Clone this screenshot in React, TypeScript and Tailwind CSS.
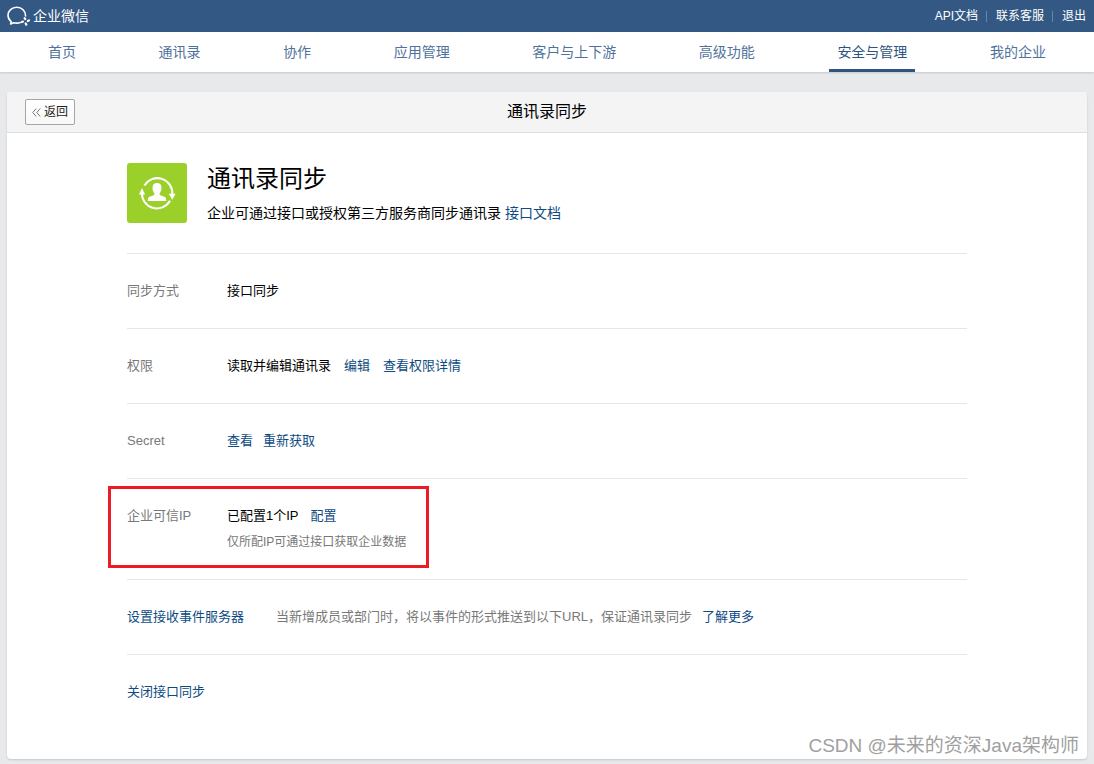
import type { ReactNode } from "react";
import { clsx } from "clsx";

const TOP_LINKS = ["API文档", "联系客服", "退出"];

const NAV_ITEMS = [
  { id: "home", label: "首页" },
  { id: "contacts", label: "通讯录" },
  { id: "collab", label: "协作" },
  { id: "apps", label: "应用管理" },
  { id: "customer", label: "客户与上下游" },
  { id: "advanced", label: "高级功能" },
  { id: "security", label: "安全与管理" },
  { id: "company", label: "我的企业" },
];

const ACTIVE_ID = "security";

function Logo() {
  return (
    <svg width="24" height="20" viewBox="0 0 24 20" fill="none" aria-hidden="true">
      <path
        d="M18.6 10C18.7 5 14.8 1.2 9.8 1.2C4.8 1.2 1 4.8 1 9.2C1 11.9 2.2 14.1 4.2 15.6L3.6 18L6.7 16.7C8.8 17.3 11.2 17.3 13.2 16.6"
        stroke="#fff"
        strokeWidth="1.6"
        strokeLinecap="round"
        strokeLinejoin="round"
      />
      <g stroke="#fff" strokeWidth="2.2" strokeLinecap="round">
        <path d="M17.6 12.2L18.3 13.2" />
        <path d="M22 14.4L20.9 15" />
        <path d="M19.3 18.6L18.7 17.5" />
        <path d="M14.9 16.1L16 15.6" />
      </g>
    </svg>
  );
}

function SyncIcon() {
  return (
    <svg className="shrink-0" width="60" height="60" viewBox="0 0 60 60" aria-hidden="true">
      <rect width="60" height="60" rx="3" fill="#9bd02a" />
      <g fill="none" stroke="#fff" strokeWidth="2">
        <path d="M17.4 22.6A15 15 0 0 1 45.3 31.5" />
        <path d="M43 37.8A15 15 0 0 1 15 29" />
      </g>
      <path d="M15 25L18.1 31.4H11.9Z M45.2 36.8L41.8 30.8H48.6Z" fill="#fff" />
      <path
        d="M30 20C33 20 34.5 22 34.5 24.7C34.5 27 33.8 28.8 32.8 30.2C32.3 31.2 32.5 32 33.8 32.5L37.4 33.8C38.8 34.4 39.2 35.4 39.2 38H20.8C20.8 35.4 21.2 34.4 22.6 33.8L26.2 32.5C27.5 32 27.7 31.2 27.2 30.2C26.2 28.8 25.5 27 25.5 24.7C25.5 22 27 20 30 20Z"
        fill="#fff"
      />
    </svg>
  );
}

function TextLink({ children }: { children: ReactNode }) {
  return (
    <a href="#" className="text-[#0d4b82] hover:underline">
      {children}
    </a>
  );
}

function Row({ label, children }: { label: string; children: ReactNode }) {
  return (
    <div className="relative flex border-t border-[#e4e6e9] py-7">
      <div className="w-[100px] shrink-0 text-[#787878]">{label}</div>
      <div>{children}</div>
    </div>
  );
}

export default function App() {
  return (
    <div className="relative flex min-h-screen flex-col bg-[#e8e9eb] font-['Liberation_Sans','Noto_Sans_CJK_SC',sans-serif] text-black">
      {/* Top bar */}
      <header className="flex h-8 items-center justify-between bg-[#335883] pr-2 pl-[7px] text-white">
        <a href="#" className="flex items-center gap-[2px] text-sm">
          <Logo />
          企业微信
        </a>
        <ul className="flex items-center text-xs">
          {TOP_LINKS.map((label, i) => (
            <li key={label} className="flex items-center">
              {i > 0 && <span className="mr-[9px] ml-2 h-[11px] w-px bg-[#6288ad]" />}
              <a href="#">{label}</a>
            </li>
          ))}
        </ul>
      </header>

      {/* Main navigation */}
      <nav className="bg-white shadow-[0_1px_2px_rgba(0,0,0,0.15)]">
        <ul className="flex justify-between px-10">
          {NAV_ITEMS.map((item) => (
            <li key={item.id}>
              <a
                href="#"
                className={clsx(
                  "flex h-10 items-center border-y-3 border-t-transparent px-2 text-sm",
                  item.id === ACTIVE_ID
                    ? "border-b-[#2e5481] text-[#2e5481]"
                    : "border-b-transparent text-[#4f729c]"
                )}
              >
                {item.label}
              </a>
            </li>
          ))}
        </ul>
      </nav>

      {/* Content panel */}
      <main className="mx-[7px] mt-5 mb-[5px] flex-1 rounded bg-white shadow-[0_1px_2px_rgba(0,0,0,0.15)]">
        <div className="grid grid-cols-[1fr_auto_1fr] items-center rounded-t border-b border-[#d9e0e6] bg-[#f4f4f4] px-[18px] py-[7px]">
          <button
            type="button"
            className="flex h-[26px] w-[50px] items-center justify-center gap-[3px] rounded-xs border border-[#a6a6a6] bg-gradient-to-b from-white to-[#f8f8f8] text-xs text-[#222]"
          >
            <svg width="9" height="9" viewBox="0 0 9 9" fill="none" stroke="#777" aria-hidden="true">
              <path d="M4.2 0.5L0.8 4.5L4.2 8.5M8.2 0.5L4.8 4.5L8.2 8.5" />
            </svg>
            返回
          </button>
          <h2 className="text-base leading-6">通讯录同步</h2>
        </div>

        <div className="px-[120px] pt-[30px] pb-6 text-[13px] leading-[18px]">
          <div className="flex gap-5 pb-[30px]">
            <SyncIcon />
            <div>
              <h1 className="text-2xl leading-8">通讯录同步</h1>
              <p className="mt-2 text-sm leading-5">
                企业可通过接口或授权第三方服务商同步通讯录 <TextLink>接口文档</TextLink>
              </p>
            </div>
          </div>

          <Row label="同步方式">接口同步</Row>

          <Row label="权限">
            <div className="flex gap-[13px]">
              <span>读取并编辑通讯录</span>
              <TextLink>编辑</TextLink>
              <TextLink>查看权限详情</TextLink>
            </div>
          </Row>

          <Row label="Secret">
            <div className="flex gap-[10px]">
              <TextLink>查看</TextLink>
              <TextLink>重新获取</TextLink>
            </div>
          </Row>

          <Row label="企业可信IP">
            <div className="flex gap-3">
              <span>已配置1个IP</span>
              <TextLink>配置</TextLink>
            </div>
            <p className="mt-2 text-xs leading-[18px] text-[#787878]">仅所配IP可通过接口获取企业数据</p>
            {/* Highlight frame */}
            <div className="pointer-events-none absolute top-[7px] -left-[19px] h-[82px] w-[321px] border-3 border-[#ed1c24]" />
          </Row>

          <div className="flex gap-8 border-t border-[#e4e6e9] py-7">
            <TextLink>设置接收事件服务器</TextLink>
            <div className="flex gap-[10px]">
              <span className="text-[#787878]">
                当新增成员或部门时，将以事件的形式推送到以下URL，保证通讯录同步
              </span>
              <TextLink>了解更多</TextLink>
            </div>
          </div>

          <div className="border-t border-[#e4e6e9] pt-7">
            <TextLink>关闭接口同步</TextLink>
          </div>
        </div>
      </main>

      {/* Watermark */}
      <div className="pointer-events-none absolute right-[15px] bottom-1 text-[19px] leading-7 text-[#a0a0a0] [text-shadow:1px_1px_0_#fff]">
        CSDN @未来的资深Java架构师
      </div>
    </div>
  );
}
